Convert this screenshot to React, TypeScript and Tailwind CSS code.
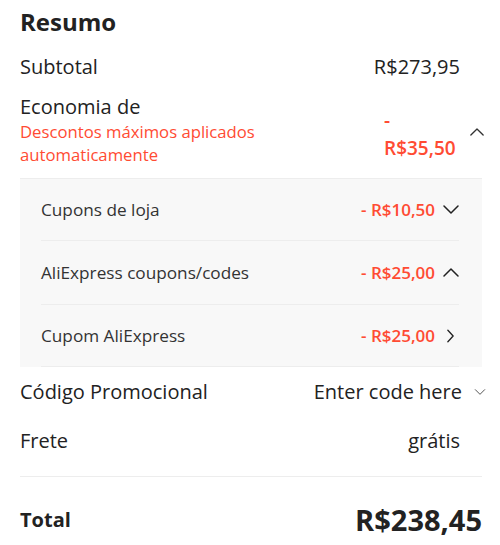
const Chevron = ({ dir, className }: { dir: 'up' | 'down' | 'right'; className?: string }) => {
  const pts = dir === 'up' ? '1,8 8,1 15,8' : dir === 'down' ? '1,1 8,8 15,1' : '1,1 7,7.5 1,14';
  const vb = dir === 'right' ? '0 0 8 15' : '0 0 16 9';
  return (
    <svg viewBox={vb} className={className} fill="none" stroke="currentColor" strokeWidth="1.5" strokeLinecap="round" strokeLinejoin="round">
      <polyline points={pts} />
    </svg>
  );
};

const InnerRow = ({ label, amount, icon, h }: { label: string; amount: string; icon: 'up' | 'down' | 'right'; h: string }) => (
  <div className={`flex items-center justify-between border-b border-[#ededed] ${h}`}>
    <span className="text-[17.2px] text-[#333]">{label}</span>
    <div className="flex items-center gap-[7px]">
      <span className="text-[17px] font-semibold text-[#ff4b33]">{amount}</span>
      <div className="flex w-[17px] justify-center text-[#222]">
        {icon === 'right' ? <Chevron dir="right" className="h-[14px] w-[7px]" /> : <Chevron dir={icon} className="h-[9px] w-[16px]" />}
      </div>
    </div>
  </div>
);

export default function App() {
  return (
    <div className="w-[500px] h-[545px] overflow-hidden bg-white pl-5 pr-[18px] font-['Open_Sans',sans-serif] text-[#222]">
      <div className="flex h-[44px] items-center text-[24px] font-bold">Resumo</div>

      <div className="flex h-[46px] items-center justify-between pr-[22px] text-[20px]">
        <span>Subtotal</span>
        <span>R$273,95</span>
      </div>

      <div className="flex justify-between border-b border-[#ededed] pt-[4px] pb-[12px]">
        <div>
          <div className="text-[20px] leading-[26px]">Economia de</div>
          <div className="text-[16.7px] leading-[23px] text-[#ff4b33]">
            Descontos máximos aplicados
            <br />
            automaticamente
          </div>
        </div>
        <div className="flex">
          <div className="w-[76px] pt-[12px] text-[19px] font-semibold leading-[28px] text-[#ff4b33]">
            <div>-</div>
            <div>R$35,50</div>
          </div>
          <div className="-mr-[4px] ml-[10px] flex w-[16px] pt-[34px] text-[#333]">
            <Chevron dir="up" className="h-[8px] w-[14px]" />
          </div>
        </div>
      </div>

      <div className="bg-[#f8f8f8] pl-[21px] pr-[23px]">
        <InnerRow label="Cupons de loja" amount="- R$10,50" icon="down" h="h-[62px]" />
        <InnerRow label="AliExpress coupons/codes" amount="- R$25,00" icon="up" h="h-[64px]" />
        <InnerRow label="Cupom AliExpress" amount="- R$25,00" icon="right" h="h-[62px]" />
      </div>

      <div className="flex h-[50px] items-center justify-between text-[20px]">
        <span>Código Promocional</span>
        <div className="flex items-center">
          <span>Enter code here</span>
          <div className="-mr-[4px] ml-[12px] flex w-[12px] text-[#555]">
            <Chevron dir="down" className="h-[6px] w-[12px]" />
          </div>
        </div>
      </div>

      <div className="flex h-[48px] items-center justify-between pr-[22px] text-[20px]">
        <span>Frete</span>
        <span>grátis</span>
      </div>

      <div className="h-[12px] border-b border-[#ededed]" />

      <div className="flex h-[86px] items-center justify-between">
        <span className="text-[20px] font-bold">Total</span>
        <span className="text-[29px] font-bold">R$238,45</span>
      </div>
    </div>
  );
}
